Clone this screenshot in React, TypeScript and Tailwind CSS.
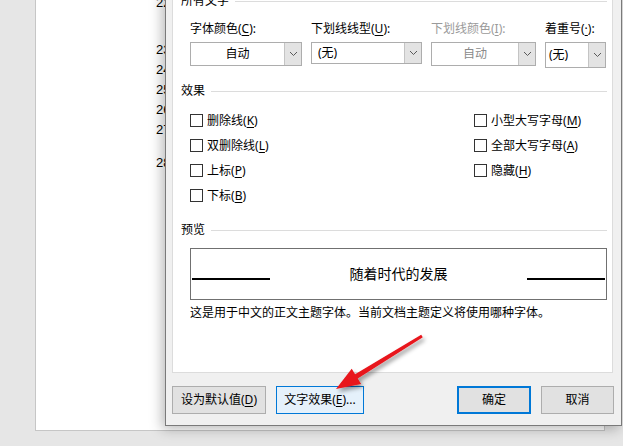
import type { ReactNode } from 'react'

const ui = "font-['Noto_Sans','Noto_Sans_CJK_SC',sans-serif]"

function K({ children }: { children: ReactNode }) {
  return <span className="underline underline-offset-[2px]">{children}</span>
}

function Chevron() {
  return (
    <svg width="9" height="6" viewBox="0 0 9 6" fill="none">
      <polyline points="1,1 4.5,4.5 8,1" stroke="#5a5a5a" strokeWidth="1" />
    </svg>
  )
}

function Select({
  value,
  className,
  textClass,
  disabled,
}: {
  value: string
  className: string
  textClass: string
  disabled?: boolean
}) {
  return (
    <div className={`flex border border-[#adadad] bg-white ${className}`}>
      <div className={`flex flex-1 items-center ${textClass} ${disabled ? 'text-[#8a8a8a]' : 'text-black'}`}>
        {value}
      </div>
      <div className="flex w-[17px] items-center justify-center border-l border-[#c4c4c4] bg-[#e3e3e3]">
        <Chevron />
      </div>
    </div>
  )
}

function Check({ label, k }: { label: string; k: string }) {
  return (
    <div className="flex h-[25px] items-center gap-[4px]">
      <span className="h-[13px] w-[13px] border border-[#333333] bg-white" />
      <span>
        {label}(<K>{k}</K>)
      </span>
    </div>
  )
}

function Heading({ title, className }: { title: string; className: string }) {
  return (
    <div className={`flex h-[18px] items-center gap-[6px] ${className}`}>
      <span className="leading-[16px]">{title}</span>
      <div className="h-px flex-1 bg-[#dcdcdc]" />
    </div>
  )
}

export default function App() {
  return (
    <div className={`relative h-[446px] w-[623px] overflow-hidden bg-[#e6e6e6] text-[12px] text-black ${ui}`}>
      {/* document page behind the dialog */}
      <div className="ml-[35px] h-[438px] w-[570px] border-x border-b border-[#c6c6c6] bg-white pl-[120px] font-['Liberation_Sans',sans-serif] text-[13px] leading-[20px]">
        <div className="mt-[-7px] h-[20px]">22</div>
        <div className="mt-[27px] h-[20px]">23</div>
        <div className="h-[20px]">24</div>
        <div className="h-[20px]">25</div>
        <div className="h-[20px]">26</div>
        <div className="h-[20px]">27</div>
        <div className="mt-[13px] h-[20px]">28</div>
      </div>

      {/* font dialog */}
      <div className="absolute left-[165px] top-[-10px] flex h-[436px] w-[457px] flex-col border border-[#7a7a7a] bg-[#f0f0f0] shadow-[-3px_3px_12px_rgba(0,0,0,0.28)]">
        <div className="mx-[6px] mr-[8px] flex h-[382px] flex-col border border-[#dcdcdc] bg-white pl-[8px] pr-[5px]">
          <Heading title="所有文字" className="" />

          <div className="ml-[9px] mt-[11px] flex items-start gap-[9px]">
            <div className="w-[112px]">
              <div className="h-[16px] leading-[16px]">
                字体颜色(<K>C</K>):
              </div>
              <Select value="自动" className="mt-[5px] h-[24px]" textClass="justify-center" />
            </div>
            <div className="w-[111px]">
              <div className="h-[16px] leading-[16px]">
                下划线线型(<K>U</K>):
              </div>
              <Select value="(无)" className="mt-[5px] h-[22px]" textClass="pl-[6px]" />
            </div>
            <div className="w-[105px]">
              <div className="h-[16px] leading-[16px] text-[#9a9a9a]">
                下划线颜色(<K>I</K>):
              </div>
              <Select value="自动" className="mt-[5px] h-[24px]" textClass="justify-center" disabled />
            </div>
            <div className="w-[61px]">
              <div className="h-[16px] leading-[16px]">
                着重号(<K>·</K>):
              </div>
              <Select value="(无)" className="mt-[5px] h-[26px]" textClass="pl-[3px]" />
            </div>
          </div>

          <Heading title="效果" className="mt-[14px]" />

          <div className="ml-[9px] mt-[8px] flex">
            <div className="w-[284px]">
              <Check label="删除线" k="K" />
              <Check label="双删除线" k="L" />
              <Check label="上标" k="P" />
              <Check label="下标" k="B" />
            </div>
            <div>
              <Check label="小型大写字母" k="M" />
              <Check label="全部大写字母" k="A" />
              <Check label="隐藏" k="H" />
            </div>
          </div>

          <Heading title="预览" className="mt-[13px]" />

          <div className="ml-[9px] mt-[9px] flex h-[52px] items-center border border-[#707070] px-px">
            <div className="mt-[10px] h-[1.5px] w-[78px] bg-black" />
            <div className="flex-1 text-center text-[14px] leading-[18px]">随着时代的发展</div>
            <div className="mt-[10px] h-[1.5px] w-[78px] bg-black" />
          </div>

          <div className="ml-[9px] mt-[5px] leading-[16px]">
            这是用于中文的正文主题字体。当前文档主题定义将使用哪种字体。
          </div>
        </div>

        <div className="mt-[13px] flex justify-between pl-[6px] pr-[7px]">
          <div className="flex gap-[10px]">
            <button className="flex h-[28px] w-[94px] items-center justify-center border border-[#adadad] bg-[#e1e1e1]">
              设为默认值(<K>D</K>)
            </button>
            <button className="flex h-[28px] w-[88px] items-center justify-center border border-[#0078d7] bg-[#e5f1fb]">
              文字效果(<K>E</K>)...
            </button>
          </div>
          <div className="flex gap-[10px]">
            <button className="flex h-[28px] w-[74px] items-center justify-center border-2 border-[#0078d7] bg-[#e1e1e1]">
              确定
            </button>
            <button className="flex h-[28px] w-[73px] items-center justify-center border border-[#adadad] bg-[#e1e1e1]">
              取消
            </button>
          </div>
        </div>
      </div>

      {/* red annotation arrow */}
      <svg className="pointer-events-none absolute left-0 top-0" width="623" height="446" viewBox="0 0 623 446">
        <defs>
          <filter id="sh" x="-20%" y="-20%" width="140%" height="140%">
            <feDropShadow dx="2" dy="3" stdDeviation="2" floodColor="#000" floodOpacity="0.4" />
          </filter>
        </defs>
        <polygon
          filter="url(#sh)"
          fill="#e8141b"
          points="421.2,334.7 355.1,374.3 351.7,368.8 336,389 361.1,384 357.7,378.5 422.8,337.3"
        />
      </svg>
    </div>
  )
}
